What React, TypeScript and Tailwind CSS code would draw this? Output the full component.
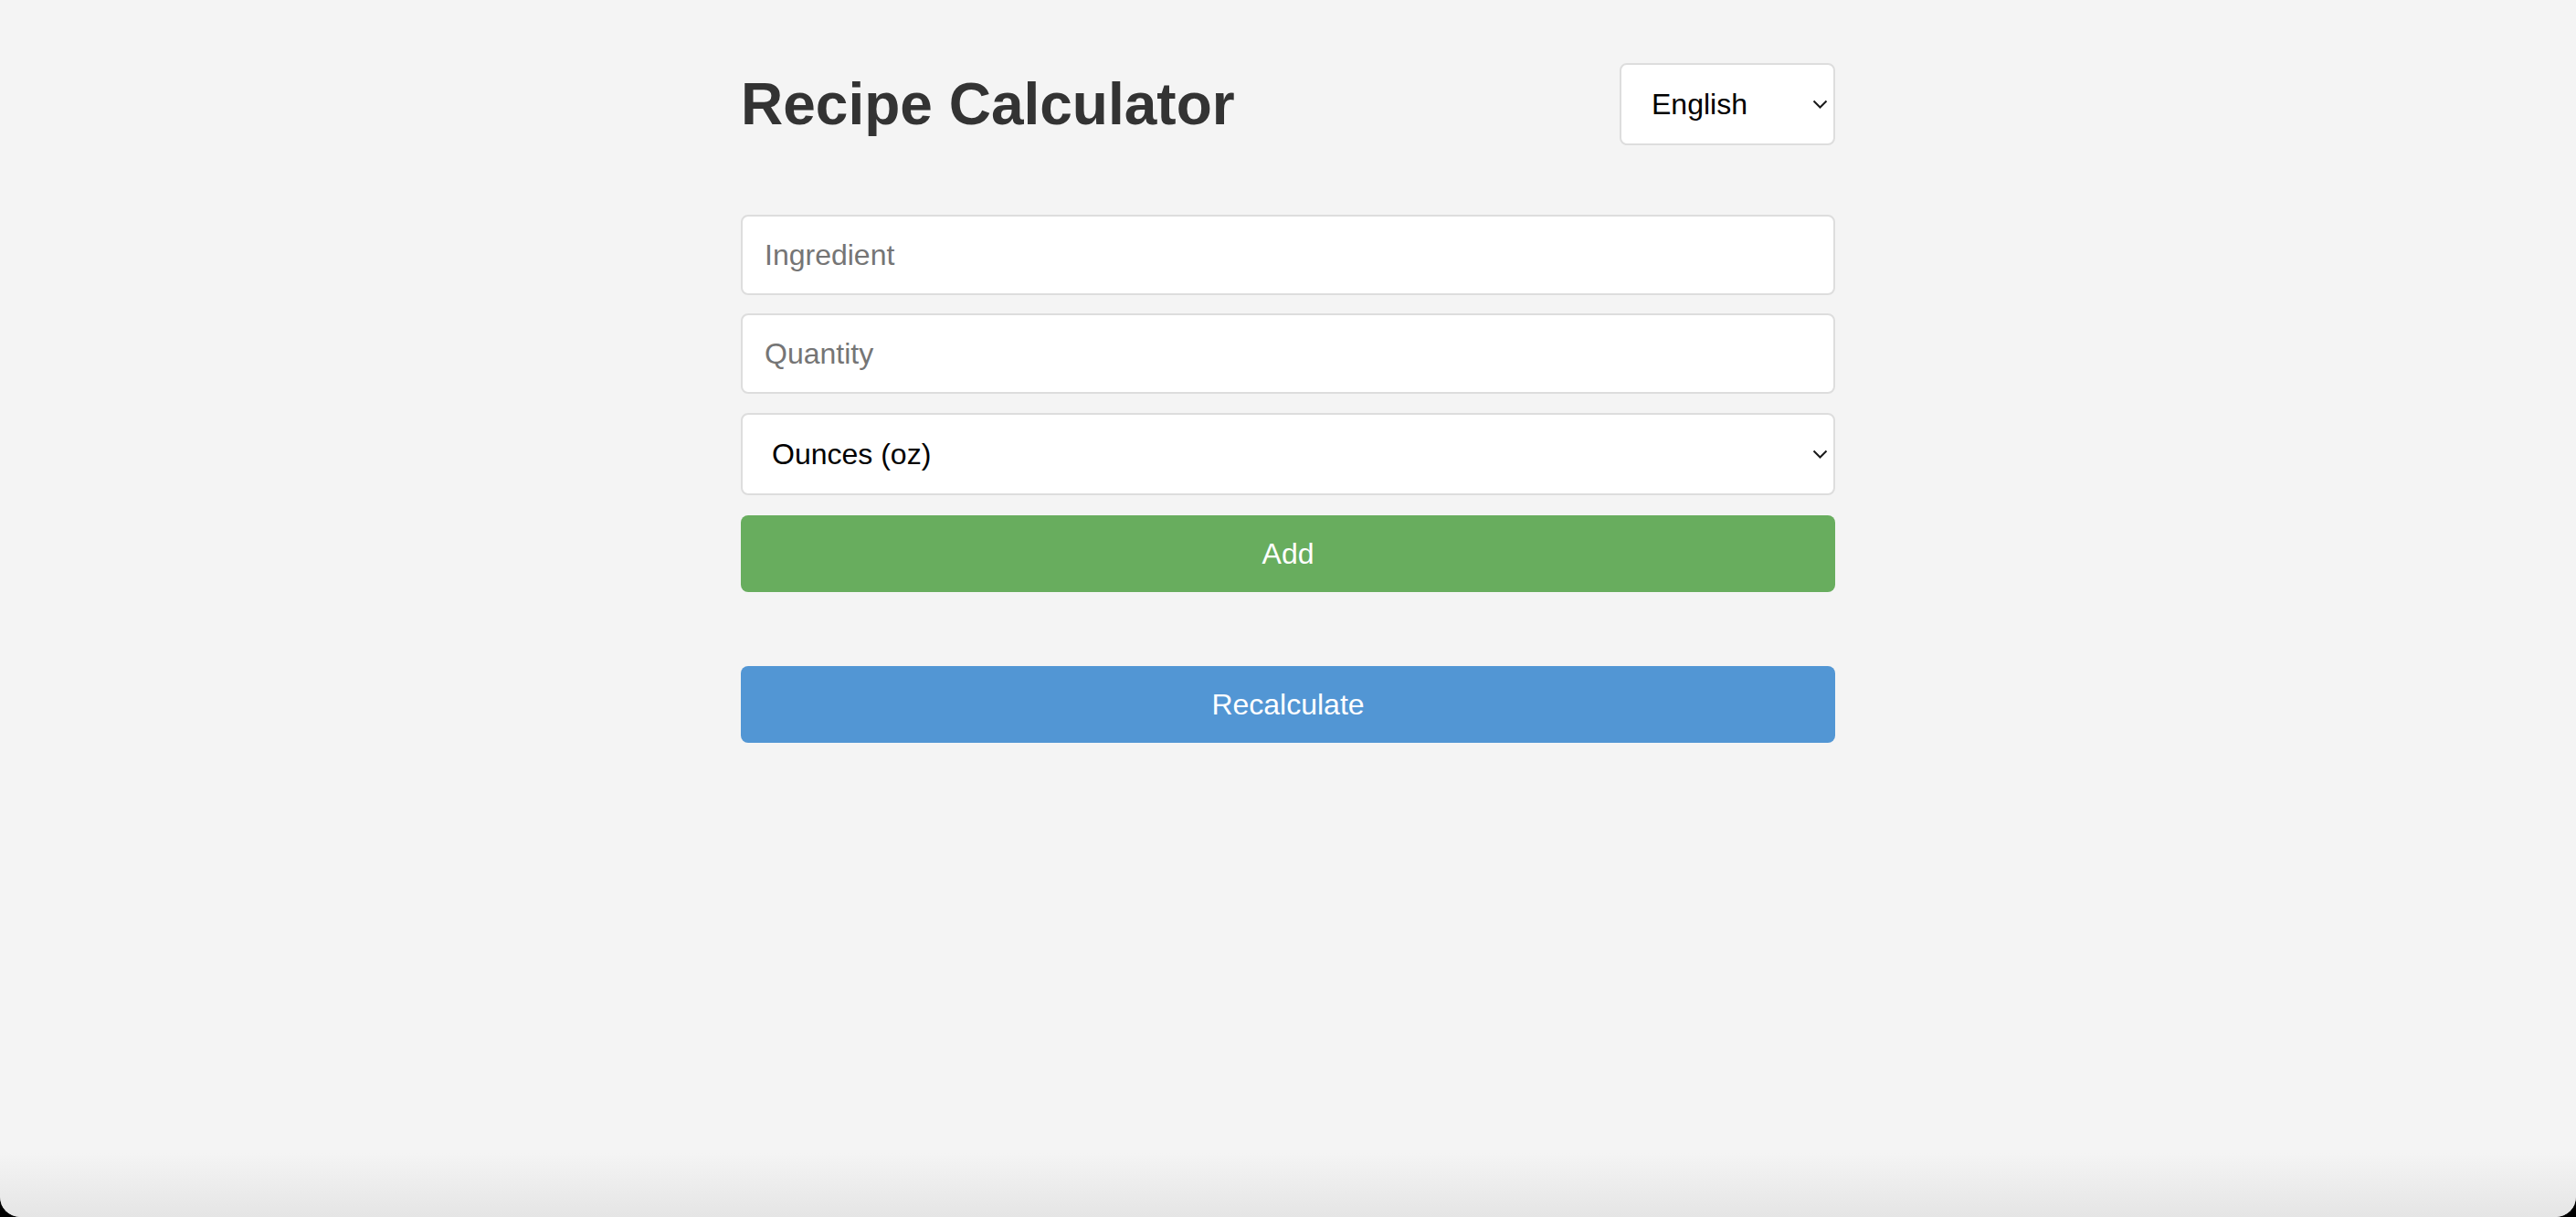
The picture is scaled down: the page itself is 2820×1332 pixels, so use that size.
import React from "react";

function Chevron() {
  return (
    <svg
      className="pointer-events-none absolute right-[8px] top-1/2 -translate-y-1/2"
      width="17"
      height="10"
      viewBox="0 0 17 10"
      fill="none"
    >
      <path d="M1.5 1.5 L8.5 8.5 L15.5 1.5" stroke="#1a1a1a" strokeWidth="2" />
    </svg>
  );
}

export default function App() {
  const font = { fontFamily: '"Liberation Sans", Arial, Helvetica, sans-serif' };
  return (
    <div className="h-[1332px] bg-black" style={font}>
      <div className="relative h-[1332px] overflow-hidden rounded-b-[22px] bg-[#f4f4f4]">
        <div className="mx-auto w-[1198px] pt-[69px]">
          <div className="flex h-[90px] items-center justify-between">
            <h1 className="text-[64px] font-bold leading-[72px] text-[#333333]">Recipe Calculator</h1>
            <div className="relative h-[90px] w-[236px]">
              <select
                defaultValue="en"
                className="h-full w-full appearance-none rounded-[8px] border-2 border-[#dddddd] bg-white pl-[33px] text-[32px] text-black outline-none"
              >
                <option value="en">English</option>
                <option value="es">Español</option>
                <option value="fr">Français</option>
              </select>
              <Chevron />
            </div>
          </div>

          <div className="mt-[76px] flex flex-col">
            <input
              type="text"
              placeholder="Ingredient"
              className="h-[88px] w-full rounded-[8px] border-2 border-[#dddddd] bg-white px-[24px] text-[32px] text-black outline-none placeholder:text-[#757575]"
            />
            <input
              type="text"
              placeholder="Quantity"
              className="mt-[20px] h-[88px] w-full rounded-[8px] border-2 border-[#dddddd] bg-white px-[24px] text-[32px] text-black outline-none placeholder:text-[#757575]"
            />
            <div className="relative mt-[21px] h-[90px] w-full">
              <select
                defaultValue="oz"
                className="h-full w-full appearance-none rounded-[8px] border-2 border-[#dddddd] bg-white pl-[32px] text-[32px] text-black outline-none"
              >
                <option value="oz">Ounces (oz)</option>
                <option value="g">Grams (g)</option>
                <option value="cup">Cups</option>
              </select>
              <Chevron />
            </div>
            <button className="mt-[22px] h-[84px] w-full rounded-[8px] bg-[#68ad5e] text-[32px] text-white">
              Add
            </button>
          </div>

          <button className="mt-[81px] h-[84px] w-full rounded-[8px] bg-[#5296d4] text-[32px] text-white">
            Recalculate
          </button>
        </div>
        <div className="pointer-events-none absolute inset-x-0 bottom-0 h-[70px] rounded-b-[22px] bg-linear-to-t from-[#e5e5e5] to-transparent" />
      </div>
    </div>
  );
}
